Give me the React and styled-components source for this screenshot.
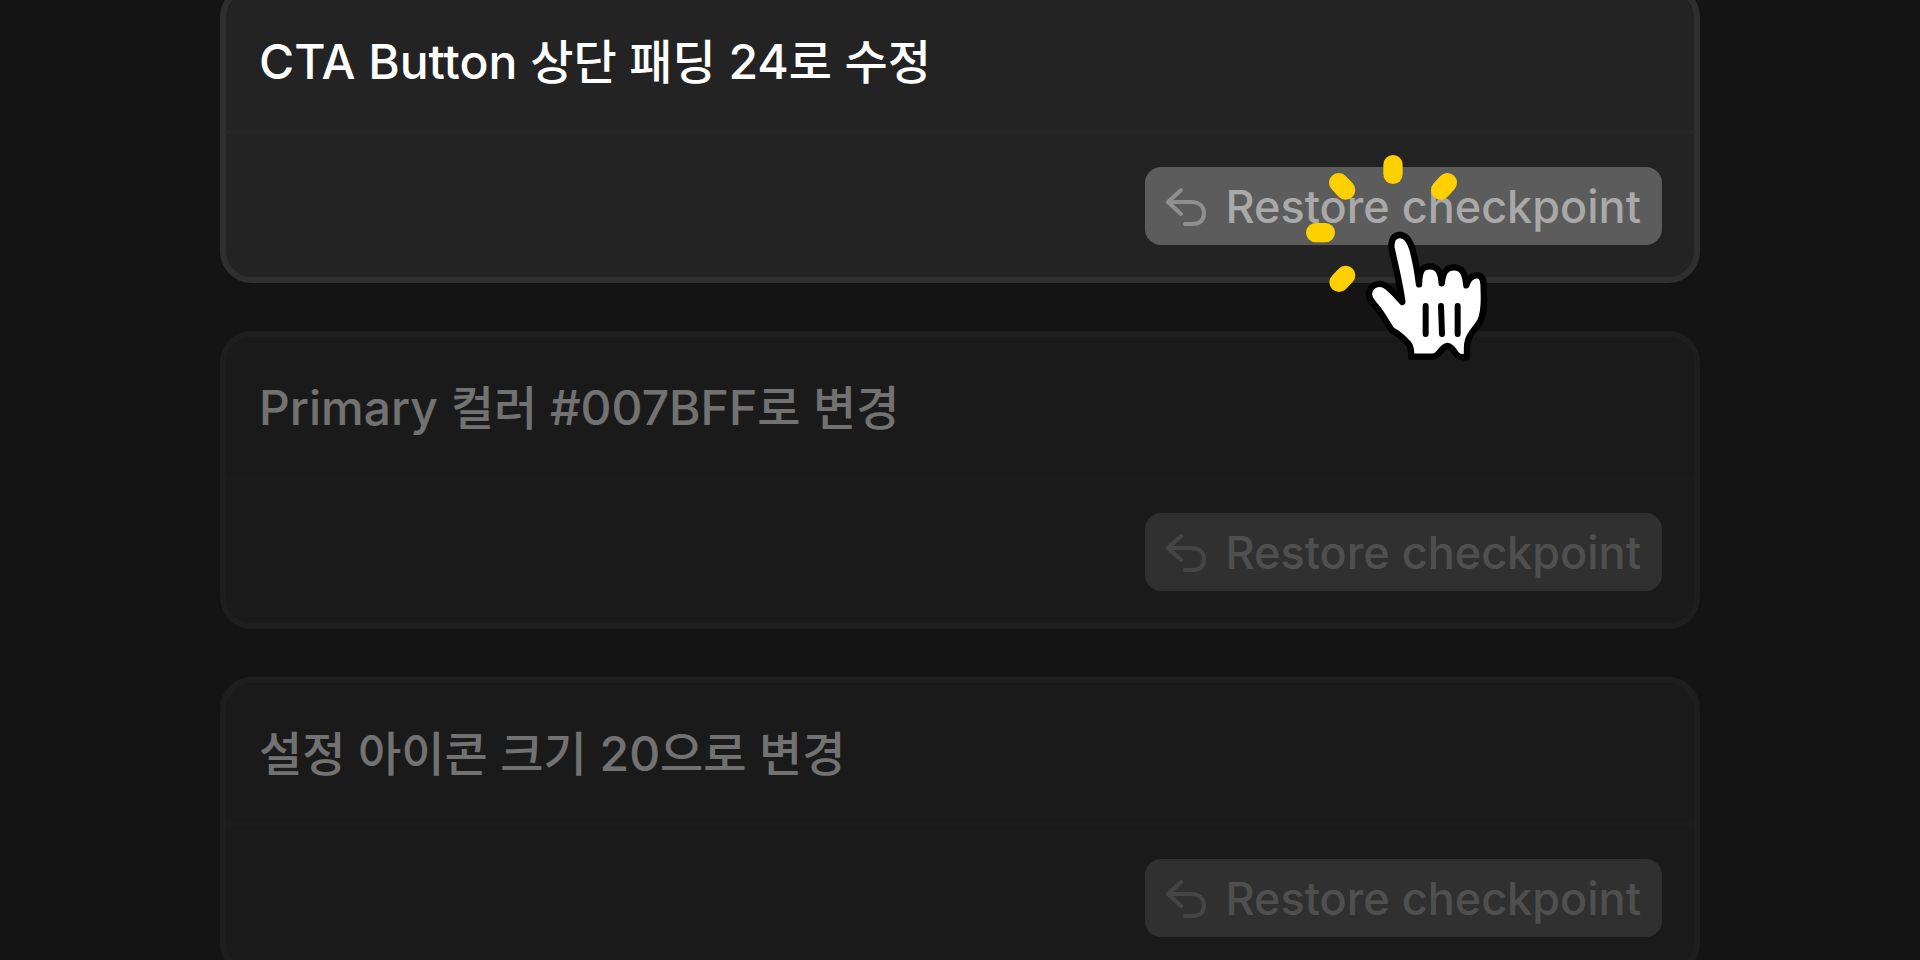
import React from "react";
import styled, { createGlobalStyle } from "styled-components";

const GlobalStyle = createGlobalStyle`
  * {
    box-sizing: border-box;
  }

  body {
    margin: 0;
    background-color: #141414;
  }
`;

const Page = styled.main`
  height: 100vh;
  padding: 0 32px;
  overflow: hidden;
  display: flex;
  flex-direction: column;
  align-items: center;
  justify-content: center;
  gap: 48px;
  font-family: "Inter", "Noto Sans CJK KR", sans-serif;
`;

const Card = styled.section`
  flex-shrink: 0;
  width: 100%;
  max-width: 1480px;
  border: 6px solid #2f2f2f;
  border-radius: 32px;
  background-color: #232323;
  opacity: ${(props) => (props.$active ? 1 : 0.4)};
`;

const CardHeader = styled.header`
  padding: 39px 33px 36px;
  border-bottom: 4px solid #282828;
`;

const Title = styled.h2`
  margin: 0;
  color: #ffffff;
  font-size: 48px;
  font-weight: 500;
  line-height: 64px;
  white-space: nowrap;
`;

const Korean = styled.span`
  font-size: 47px;
`;

const CardFooter = styled.footer`
  display: flex;
  justify-content: flex-end;
  padding: 33px 32px 32px;
`;

const RestoreButton = styled.button`
  position: relative;
  display: flex;
  align-items: center;
  gap: 16px;
  height: 78px;
  padding: 2px 21px 0 20px;
  border: none;
  border-radius: 16px;
  background-color: #5c5c5c;
  color: #a9a9a9;
  font-family: inherit;
  font-size: 45px;
  font-weight: 500;
  line-height: 56px;
  white-space: nowrap;
  cursor: pointer;
`;

const UndoIcon = styled.svg`
  width: 44px;
  height: 44px;
  flex-shrink: 0;
  fill: none;
  stroke: #8f8f8f;
  stroke-width: 4;
  stroke-linecap: round;
  stroke-linejoin: round;
`;

const ClickHand = styled.svg`
  position: absolute;
  top: -27px;
  right: 142px;
  width: 240px;
  height: 230px;
  z-index: 2;
  pointer-events: none;
`;

const checkpoints = [
  {
    id: 1,
    active: true,
    title: [
      "CTA Button ",
      <Korean key="a">상단 패딩</Korean>,
      " 24",
      <Korean key="b">로 수정</Korean>,
    ],
  },
  {
    id: 2,
    title: [
      "Primary ",
      <Korean key="a">컬러</Korean>,
      " #007BFF",
      <Korean key="b">로 변경</Korean>,
    ],
  },
  {
    id: 3,
    title: [
      <Korean key="a">설정 아이콘 크기</Korean>,
      " 20",
      <Korean key="b">으로 변경</Korean>,
    ],
  },
];

const Pointer = () => (
  <ClickHand viewBox="0 0 720 690" aria-hidden="true">
    <g stroke="#ffd000" strokeWidth="58" strokeLinecap="round">
      <path d="M339 74V103" />
      <path d="M176 128L197 150" />
      <path d="M502 128L482 150" />
      <path d="M107 278H136" />
      <path d="M197 406L177 427" />
    </g>
    <path
      d="M394 650C394 628 392 618 384 610C370 594 354 580 336 571C318 545 304 518 288 500C274 484 266 474 267 461C269 436 296 425 315 436C334 448 350 468 367 486C360 430 345 375 335 325C331 300 342 285 360 285C380 285 390 304 397 327C407 363 413 400 417 433C418 396 424 379 449 379C475 379 483 398 485 430C489 396 498 382 522 382C549 382 556 404 559 436C566 412 580 403 598 407C612 412 611 430 611 450C613 490 613 520 600 545C586 570 566 580 562 610C560 628 561 640 561 651C546 653 535 652 528 642C516 625 510 618 502 618C493 618 486 628 476 640C468 650 462 650 450 650Z"
      fill="#fff"
      stroke="#000"
      strokeWidth="19"
      strokeLinejoin="round"
    />
    <path
      d="M437 498V582M483 498L486 582M533 498V582"
      stroke="#000"
      strokeWidth="18"
      strokeLinecap="round"
    />
  </ClickHand>
);

const App = () => {
  return (
    <>
      <GlobalStyle />
      <Page>
        {checkpoints.map(({ id, title, active }) => (
          <Card key={id} $active={active}>
            <CardHeader>
              <Title>{title}</Title>
            </CardHeader>
            <CardFooter>
              <RestoreButton type="button">
                <UndoIcon viewBox="0 0 44 44" aria-hidden="true">
                  <path d="M16 5L3 17L16 29" />
                  <path d="M3 17H26C35 17 39 22 39 28C39 35 35 39 27 39H20" />
                </UndoIcon>
                Restore checkpoint
                {active && <Pointer />}
              </RestoreButton>
            </CardFooter>
          </Card>
        ))}
      </Page>
    </>
  );
};

export default App;
